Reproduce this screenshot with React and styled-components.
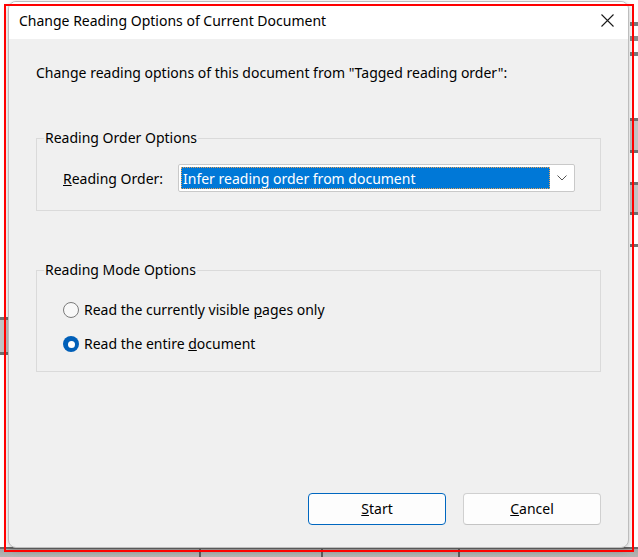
import React from "react";
import styled, { createGlobalStyle } from "styled-components";

const GlobalStyle = createGlobalStyle`
  html, body { margin: 0; padding: 0; background: #ffffff; }
  body { font-family: "Noto Sans", "Segoe UI", sans-serif; }
  * { box-sizing: border-box; }
`;

const Stage = styled.div`
  position: relative;
  width: 638px;
  height: 557px;
  overflow: hidden;
  background: #ffffff;
`;

/* backdrop behind the dialog (sheet cells peeking out) */
const BackCell = styled.div`
  position: absolute;
  background: ${(p) => p.$fill || "#c4c4c4"};
  border-top: ${(p) => (p.$lines ? "3px solid #6f6f6f" : "none")};
  border-bottom: ${(p) => (p.$lines ? "3px solid #6f6f6f" : "none")};
`;

const BottomBand = styled.div`
  position: absolute;
  left: 0;
  right: 0;
  top: 547px;
  height: 10px;
  background: linear-gradient(#6a6a6a 0 2px, #a6a6a6 2px, #b4b4b4);
`;

const BandTick = styled.div`
  position: absolute;
  top: 549px;
  width: 2px;
  height: 8px;
  background: #5c5c5c;
`;

const Window = styled.div`
  position: relative;
  margin: 1px 0 0 8px;
  width: 621px;
  height: 547px;
  border: 1px solid #bdbdbd;
  border-radius: 8px;
  background: #f0f0f0;
  display: flex;
  flex-direction: column;
  overflow: hidden;
  box-shadow: 0 2px 6px rgba(0, 0, 0, 0.25);
`;

const TitleBar = styled.div`
  height: 37px;
  flex: none;
  background: #ffffff;
  display: flex;
  align-items: center;
  justify-content: space-between;
  padding: 0 14px 0 10px;
`;

const TitleText = styled.div`
  font-size: 14px;
  color: #000;
  padding-bottom: 1px;
`;

const CloseGlyph = styled.svg`
  width: 13px;
  height: 13px;
  display: block;
`;

const Body = styled.div`
  flex: 1;
  display: flex;
  flex-direction: column;
  padding: 24px 27px 22px 27px;
  font-size: 14px;
  color: #000;
`;

const Intro = styled.div`
  line-height: 20px;
  margin-bottom: 45px;
`;

const Group = styled.fieldset`
  margin: 0 0 ${(p) => p.$gapAfter || 0}px 0;
  padding: 0;
  border: 1px solid #dadada;
  min-width: 0;
`;

const GroupContent = styled.div`
  padding: ${(p) => p.$pad};
`;

const Legend = styled.legend`
  margin-left: 7px;
  padding: 0 1px;
  line-height: 20px;
  font-size: 14px;
`;

const FieldRow = styled.div`
  display: grid;
  grid-template-columns: 115px 397px;
  align-items: center;
`;

const Label = styled.span`
  line-height: 20px;
  padding-top: 2px;
`;

const Select = styled.div`
  height: 28px;
  border: 1px solid #c9c9c9;
  border-radius: 2px;
  background: #ffffff;
  display: flex;
  align-items: center;
  padding: 2px 0 2px 2px;
`;

const Selected = styled.div`
  flex: 1;
  height: 22px;
  background: #0078d7;
  color: #ffffff;
  outline: 1px dotted #e8a35a;
  outline-offset: -1px;
  display: flex;
  align-items: center;
  padding-left: 2px;
`;

const ChevronBox = styled.div`
  width: 24px;
  flex: none;
  display: flex;
  justify-content: center;
  align-items: center;
`;

const RadioList = styled.div`
  display: flex;
  flex-direction: column;
  gap: 10px;
`;

const RadioRow = styled.label`
  display: flex;
  align-items: center;
  height: 24px;
  gap: 5px;
`;

const RadioDot = styled.span`
  width: 16px;
  height: 16px;
  flex: none;
  border-radius: 50%;
  border: ${(p) => (p.$on ? "none" : "1px solid #7b7b7b")};
  background: ${(p) => (p.$on ? "#005fb8" : "#f8f8f8")};
  display: flex;
  align-items: center;
  justify-content: center;
  &::after {
    content: "";
    display: ${(p) => (p.$on ? "block" : "none")};
    width: 7px;
    height: 7px;
    border-radius: 50%;
    background: #ffffff;
  }
`;

const RadioText = styled.span`
  line-height: 20px;
`;

const Footer = styled.div`
  margin-top: auto;
  display: flex;
  justify-content: flex-end;
  gap: 17px;
`;

const Button = styled.button`
  width: 138px;
  height: 32px;
  font-family: inherit;
  font-size: 14px;
  line-height: 20px;
  color: #000;
  background: #fdfdfd;
  border: 1px solid ${(p) => (p.$primary ? "#0067c0" : "#d0d0d0")};
  border-bottom-color: ${(p) => (p.$primary ? "#0067c0" : "#c4c4c4")};
  border-radius: 4px;
  padding: 0;
`;

const Highlight = styled.div`
  position: absolute;
  left: 4px;
  top: 4px;
  width: 630px;
  height: 548px;
  border: 2px solid #ff0000;
  pointer-events: none;
`;

export default function App() {
  return (
    <>
      <GlobalStyle />
      <Stage>
        <BackCell $fill="#7a7a7a" style={{ left: 630, top: 22, width: 8, height: 4 }} />
        <BackCell $fill="#8a8a8a" style={{ left: 630, top: 36, width: 8, height: 5 }} />
        <BackCell $fill="#7a7a7a" style={{ left: 630, top: 52, width: 8, height: 4 }} />
        <BackCell $lines style={{ left: 630, top: 118, width: 8, height: 35 }} />
        <BackCell $lines style={{ left: 630, top: 182, width: 8, height: 33 }} />
        <BackCell $fill="#6f6f6f" style={{ left: 630, top: 244, width: 8, height: 3 }} />
        <BackCell $lines style={{ left: 0, top: 317, width: 8, height: 38 }} />
        <BottomBand />
        <BandTick style={{ left: 199 }} />
        <BandTick style={{ left: 321 }} />
        <BandTick style={{ left: 458 }} />

        <Window>
          <TitleBar>
            <TitleText>Change Reading Options of Current Document</TitleText>
            <CloseGlyph viewBox="0 0 13 13">
              <path d="M0.5 0.5 L12.5 12.5 M12.5 0.5 L0.5 12.5" stroke="#1a1a1a" strokeWidth="1.1" fill="none" />
            </CloseGlyph>
          </TitleBar>
          <Body>
            <Intro>Change reading options of this document from "Tagged reading order":</Intro>

            <Group $gapAfter={49}>
              <Legend>Reading Order Options</Legend>
              <GroupContent $pad="16px 0 18px 26px">
                <FieldRow>
                  <Label>
                    <u>R</u>eading Order:
                  </Label>
                  <Select>
                    <Selected>Infer reading order from document</Selected>
                    <ChevronBox>
                      <svg width="10" height="6" viewBox="0 0 10 6">
                        <path d="M0.5 0.5 L5 5 L9.5 0.5" stroke="#555" strokeWidth="1" fill="none" />
                      </svg>
                    </ChevronBox>
                  </Select>
                </FieldRow>
              </GroupContent>
            </Group>

            <Group>
              <Legend>Reading Mode Options</Legend>
              <GroupContent $pad="18px 0 15px 26px">
                <RadioList>
                  <RadioRow>
                    <RadioDot />
                    <RadioText>
                      Read the currently visible <u>p</u>ages only
                    </RadioText>
                  </RadioRow>
                  <RadioRow>
                    <RadioDot $on />
                    <RadioText>
                      Read the entire <u>d</u>ocument
                    </RadioText>
                  </RadioRow>
                </RadioList>
              </GroupContent>
            </Group>

            <Footer>
              <Button $primary>
                <u>S</u>tart
              </Button>
              <Button>
                <u>C</u>ancel
              </Button>
            </Footer>
          </Body>
        </Window>
        <Highlight />
      </Stage>
    </>
  );
}
